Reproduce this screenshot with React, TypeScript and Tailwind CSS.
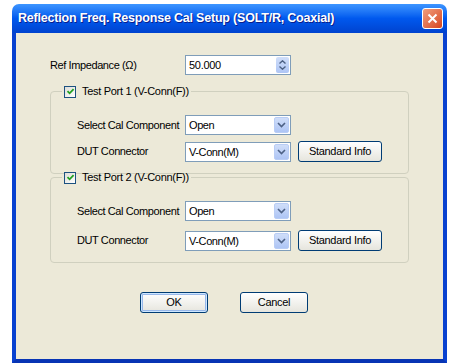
const FONT = { fontFamily: '"Liberation Sans", Arial, sans-serif' };

function Checkbox() {
  return (
    <span className="flex h-[12px] w-[12px] items-center justify-center border border-[#1c5180] bg-gradient-to-br from-[#dcdcd7] to-white">
      <svg width="9" height="9" viewBox="0 0 9 9">
        <path d="M1.5 4.2 L3.6 6.3 L7.6 2.2" fill="none" stroke="#21a121" strokeWidth="1.8" />
      </svg>
    </span>
  );
}

function Chevron() {
  return (
    <svg width="9" height="6" viewBox="0 0 9 6">
      <path d="M1 1 L4.5 4.5 L8 1" fill="none" stroke="#4d6185" strokeWidth="1.6" />
    </svg>
  );
}

function Combo({ value }: { value: string }) {
  return (
    <div className="flex h-[20px] w-[106px] items-stretch border border-[#7f9db9] bg-white">
      <span className="flex-1 whitespace-nowrap pl-[3px] text-[11px] leading-[18px] tracking-[-0.4px] text-black">{value}</span>
      <span className="m-[1px] flex w-[15px] items-center justify-center rounded-[2px] border border-[#b9cdf5] bg-gradient-to-b from-[#d0def9] to-[#aec5f5]">
        <Chevron />
      </span>
    </div>
  );
}

function XpButton({ label, width, primary }: { label: string; width: string; primary?: boolean }) {
  return (
    <div
      className={`flex h-[21px] items-center justify-center rounded-[3px] border border-[#003c74] bg-gradient-to-b from-white to-[#e6e5dd] text-[11px] tracking-[-0.3px] text-black ${width} ${
        primary ? 'shadow-[inset_0_0_0_1px_#cee7ff,inset_0_0_0_2px_#98b8ea]' : ''
      }`}
    >
      {label}
    </div>
  );
}

function PortGroup({ title, rowGap }: { title: string; rowGap: string }) {
  return (
    <fieldset className="ml-[34px] w-[354px] rounded-[4px] border border-[#d0d0bf] px-[26px] pb-[11px] pt-[17px]">
      <legend className="-ml-[15px] flex items-center gap-[6px] px-[2px] text-[11px] leading-[13px] tracking-[-0.3px] text-black">
        <Checkbox />
        <span>{title}</span>
      </legend>
      <div className={`flex flex-col ${rowGap}`}>
        <div className="flex items-center">
          <span className="w-[108px] whitespace-nowrap text-[11px] tracking-[-0.4px]">Select Cal Component</span>
          <Combo value="Open" />
        </div>
        <div className="flex items-center">
          <span className="w-[108px] whitespace-nowrap text-[11px] tracking-[-0.4px]">DUT Connector</span>
          <Combo value="V-Conn(M)" />
          <div className="ml-[7px]">
            <XpButton label="Standard Info" width="w-[84px]" />
          </div>
        </div>
      </div>
    </fieldset>
  );
}

export default function App() {
  return (
    <div className="h-[363px] w-[460px] overflow-hidden bg-white pl-[12px] pt-[4px]" style={FONT}>
      <div className="flex h-[359px] w-[435px] flex-col">
        <div className="flex h-[29px] items-center justify-between rounded-t-[7px] bg-gradient-to-b from-[#3d95ff] via-[#0058ee] to-[#0043cf] pl-[6px] pr-[4px]">
          <span className="text-[12.5px] font-bold tracking-[-0.2px] text-white [text-shadow:1px_1px_0_#0a1e8c]">
            Reflection Freq. Response Cal Setup (SOLT/R, Coaxial)
          </span>
          <div className="flex h-[21px] w-[21px] items-center justify-center rounded-[3px] border border-white bg-gradient-to-br from-[#f09d7c] to-[#d5431b]">
            <svg width="11" height="11" viewBox="0 0 11 11">
              <path d="M1.5 1.5 L9.5 9.5 M9.5 1.5 L1.5 9.5" stroke="white" strokeWidth="2" />
            </svg>
          </div>
        </div>
        <div className="flex flex-1 border-x-[4px] border-b-[4px] border-x-[#0841d0] border-b-[#0734b4]">
          <div className="flex flex-1 flex-col bg-[#ece9d8] pt-[22px] text-black">
            <div className="ml-[34px] flex items-center">
              <span className="w-[135px] whitespace-nowrap text-[11px] tracking-[-0.4px]">Ref Impedance (Ω)</span>
              <div className="flex h-[20px] w-[106px] items-stretch border border-[#7f9db9] bg-white">
                <span className="flex-1 pl-[3px] text-[11px] leading-[18px] tracking-[-0.3px]">50.000</span>
                <span className="m-[1px] flex w-[13px] flex-col items-center justify-center gap-[2px] rounded-[2px] bg-gradient-to-b from-[#d0def9] to-[#aec5f5]">
                  <svg width="7" height="4" viewBox="0 0 7 4">
                    <path d="M0.5 3.5 L3.5 0.8 L6.5 3.5" fill="none" stroke="#4d6185" strokeWidth="1.4" />
                  </svg>
                  <svg width="7" height="4" viewBox="0 0 7 4">
                    <path d="M0.5 0.5 L3.5 3.2 L6.5 0.5" fill="none" stroke="#4d6185" strokeWidth="1.4" />
                  </svg>
                </span>
              </div>
            </div>
            <div className="mt-[10px]">
              <PortGroup title="Test Port 1 (V-Conn(F))" rowGap="gap-[6px]" />
            </div>
            <div className="-mt-[3px]">
              <PortGroup title="Test Port 2 (V-Conn(F))" rowGap="gap-[9px]" />
            </div>
            <div className="mt-[29px] flex gap-[32px] pl-[124px]">
              <XpButton label="OK" width="w-[68px]" primary />
              <XpButton label="Cancel" width="w-[68px]" />
            </div>
          </div>
        </div>
      </div>
    </div>
  );
}
